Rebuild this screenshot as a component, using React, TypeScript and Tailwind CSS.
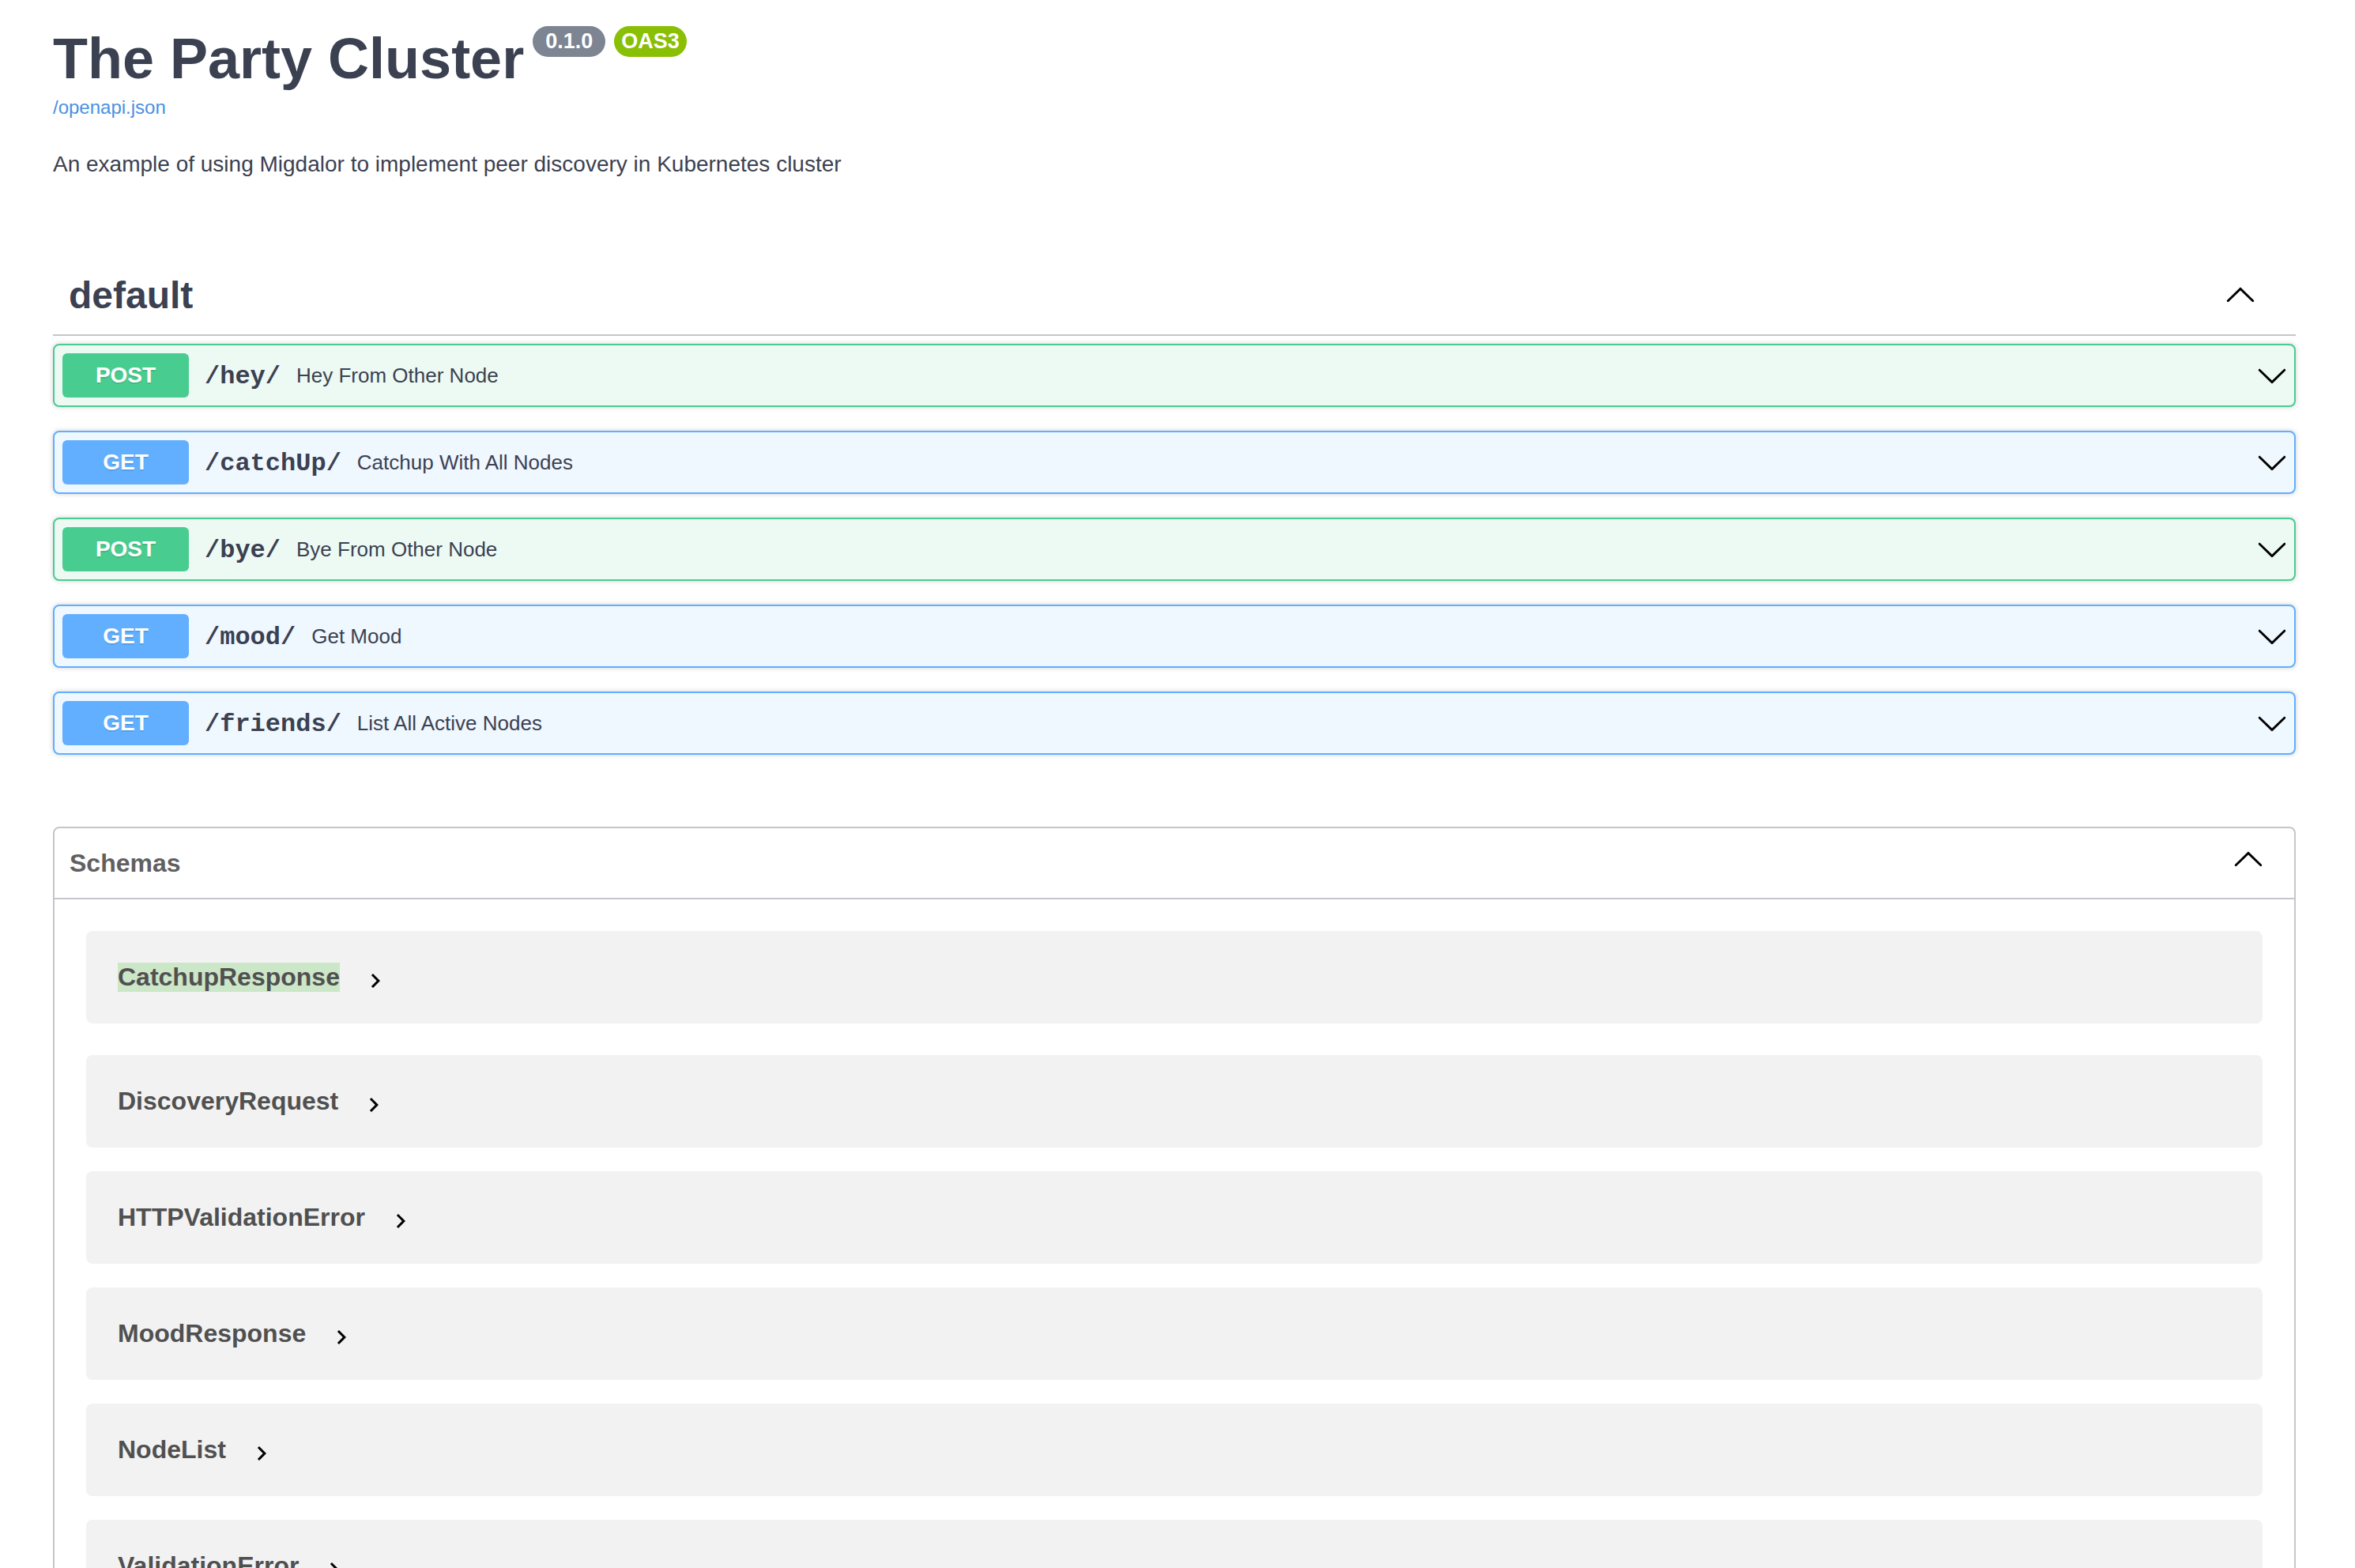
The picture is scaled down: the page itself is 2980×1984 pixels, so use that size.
const ops = [
  { method: "POST", path: "/hey/", summary: "Hey From Other Node" },
  { method: "GET", path: "/catchUp/", summary: "Catchup With All Nodes" },
  { method: "POST", path: "/bye/", summary: "Bye From Other Node" },
  { method: "GET", path: "/mood/", summary: "Get Mood" },
  { method: "GET", path: "/friends/", summary: "List All Active Nodes" },
];

const schemas = [
  "CatchupResponse",
  "DiscoveryRequest",
  "HTTPValidationError",
  "MoodResponse",
  "NodeList",
  "ValidationError",
];

function Arrow({ className }: { className?: string }) {
  return (
    <svg viewBox="0 0 20 20" fill="currentColor" className={className}>
      <path d="M17.418 6.109c.272-.268.709-.268.979 0s.271.701 0 .969l-7.908 7.83c-.27.268-.707.268-.979 0l-7.908-7.83c-.27-.268-.27-.701 0-.969.271-.268.709-.268.979 0L10 13.25l7.418-7.141z" />
    </svg>
  );
}

function Chevron() {
  return (
    <svg viewBox="0 0 24 24" className="ml-[27px] h-[36px] w-[36px] translate-y-[4px]" fill="#000">
      <path d="M10 6L8.59 7.41 13.17 12l-4.58 4.59L10 18l6-6z" />
    </svg>
  );
}

function OpBlock({ method, path, summary }: { method: string; path: string; summary: string }) {
  const isPost = method === "POST";
  return (
    <div
      className={`mb-[30px] flex items-center rounded-[8px] border-2 p-[10px] pr-[8px] shadow-[0_0_6px_rgba(0,0,0,0.19)] ${
        isPost ? "border-[#49cc90] bg-[#edfaf4]" : "border-[#61affe] bg-[#eff7ff]"
      }`}
    >
      <div
        className={`flex h-[56px] w-[160px] shrink-0 items-center justify-center rounded-[6px] text-[28px] font-bold text-white [text-shadow:0_2px_0_rgba(0,0,0,0.1)] ${
          isPost ? "bg-[#49cc90]" : "bg-[#61affe]"
        }`}
      >
        {method}
      </div>
      <div className="ml-[20px] flex flex-1 items-center gap-[20px]">
        <span className="translate-y-[2px] font-['Liberation_Mono',monospace] text-[32px] font-bold text-[#3b4151]">
          {path}
        </span>
        <span className="text-[26px] text-[#3b4151]">{summary}</span>
      </div>
      <Arrow className="h-[40px] w-[40px] text-black" />
    </div>
  );
}

export default function App() {
  return (
    <div className="min-h-screen bg-white font-['Liberation_Sans',Arial,sans-serif] text-[#3b4151]">
      <div className="ml-[67px] w-[2838px] pt-[32px]">
        {/* info */}
        <div className="flex items-start">
          <h2 className="text-[72px] font-bold leading-[84px] text-[#3b4151]">The Party Cluster</h2>
          <span className="ml-[11px] mt-[1px] rounded-full bg-[#7d8492] px-[16px] py-[4px] text-[27px] font-bold leading-[31px] text-white">
            0.1.0
          </span>
          <span className="ml-[11px] mt-[1px] rounded-full bg-[#89bf04] px-[9px] py-[4px] text-[27px] font-bold leading-[31px] text-white">
            OAS3
          </span>
        </div>
        <a className="mt-[6px] block text-[24px] leading-[28px] text-[#4990e2]">/openapi.json</a>
        <p className="mt-[42px] text-[28px] leading-[32px]">
          An example of using Migdalor to implement peer discovery in Kubernetes cluster
        </p>

        {/* default tag */}
        <div className="mt-[101px]">
          <div className="mb-[10px] flex h-[100px] items-center justify-between border-b-2 border-[#c4c6cb] pl-[20px] pr-[50px]">
            <h3 className="text-[48px] font-bold text-[#3b4151]">default</h3>
            <Arrow className="h-[40px] w-[40px] rotate-180 text-black" />
          </div>
          {ops.map((op) => (
            <OpBlock key={op.path} {...op} />
          ))}
        </div>

        {/* schemas */}
        <section className="mt-[91px] rounded-[8px] border-2 border-[#c4c6cb]">
          <div className="flex h-[90px] items-center justify-between border-b-2 border-[#c4c6cb] pl-[19px] pr-[38px]">
            <h4 className="text-[32px] font-bold text-[#606060]">Schemas</h4>
            <Arrow className="h-[40px] w-[40px] -translate-y-[4px] rotate-180 text-black" />
          </div>
          <div className="pt-[40px] pb-[20px]">
            {schemas.map((name, i) => (
              <div
                key={name}
                className={`mx-[40px] flex h-[117px] items-center rounded-[8px] bg-[#f2f2f2] pl-[40px] ${
                  i === 0 ? "mb-[40px]" : "mb-[30px]"
                }`}
              >
                <span
                  className={`text-[32px] font-bold leading-[37px] text-[#505050] ${
                    i === 0 ? "bg-[#cce6c8]" : ""
                  }`}
                >
                  {name}
                </span>
                <Chevron />
              </div>
            ))}
          </div>
        </section>
      </div>
    </div>
  );
}
